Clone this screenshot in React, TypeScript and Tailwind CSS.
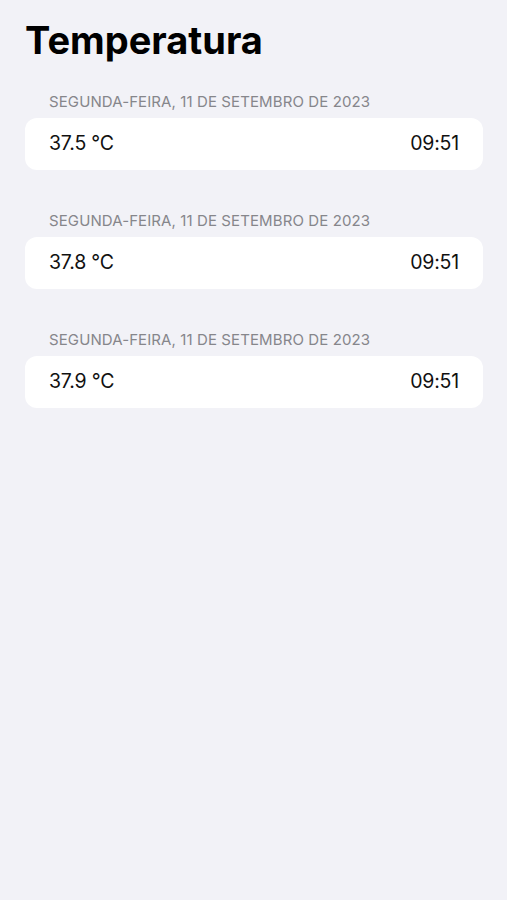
const readings = [
  { date: "SEGUNDA-FEIRA, 11 DE SETEMBRO DE 2023", value: "37.5 °C", time: "09:51" },
  { date: "SEGUNDA-FEIRA, 11 DE SETEMBRO DE 2023", value: "37.8 °C", time: "09:51" },
  { date: "SEGUNDA-FEIRA, 11 DE SETEMBRO DE 2023", value: "37.9 °C", time: "09:51" },
];

function Section({ date, value, time }: { date: string; value: string; time: string }) {
  return (
    <section className="flex flex-col">
      <div className="px-6 pb-[7px] text-[15px] leading-[18px] tracking-[0.1px] text-[#86868b]">
        {date}
      </div>
      <div className="flex h-[52px] items-center justify-between rounded-[12px] bg-white pl-6 pr-[24px] text-[19.5px] tracking-[-0.2px] text-[#111]">
        <span>{value}</span>
        <span>{time}</span>
      </div>
    </section>
  );
}

export default function App() {
  return (
    <div
      className="min-h-[900px] bg-[#f2f2f7] pl-[25px] pr-[24px] pt-[16px]"
      style={{ fontFamily: "Inter, 'Noto Sans', sans-serif" }}
    >
      <h1 className="text-[38px] font-bold leading-[48px] text-black">Temperatura</h1>
      <div className="mt-[29px] flex flex-col gap-[42px]">
        {readings.map((r, i) => (
          <Section key={i} {...r} />
        ))}
      </div>
    </div>
  );
}
